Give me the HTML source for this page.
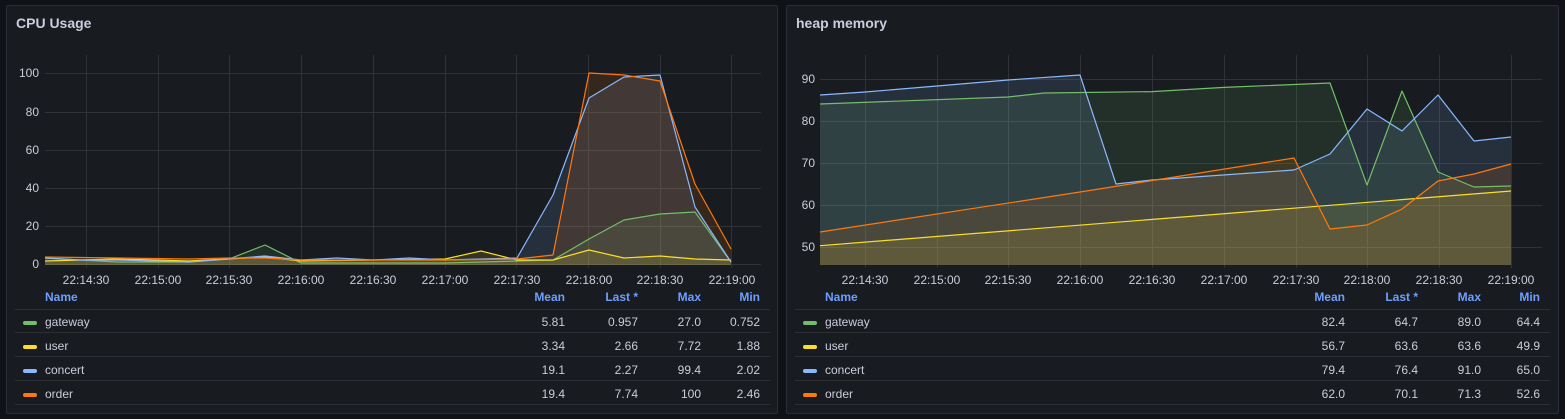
<!DOCTYPE html>
<html><head><meta charset="utf-8"><style>
*{margin:0;padding:0;box-sizing:border-box}
body{width:1565px;height:419px;background:#111217;font-family:"Liberation Sans",sans-serif;color:#ccccdc;overflow:hidden;position:relative}
.panel{position:absolute;top:5px;height:409px;background:#181b1f;border:1px solid #2a2d33;border-radius:2px}
.title{position:absolute;left:9px;top:9px;font-size:14px;font-weight:bold;color:#ccccdc}
svg{position:absolute;left:0;top:0}
svg text{font-family:"Liberation Sans",sans-serif;font-size:12px;fill:#ccccdc}
.leg{position:absolute;font-size:12px}
.row{position:absolute;left:0;height:23px;border-bottom:1px solid #2c2f35;width:100%}
.row span,.hdr span{position:absolute;top:5px}
.hdr span{color:#6e9fff;font-weight:bold;top:0}
.sw{position:absolute;left:8px;top:11px;width:14px;height:4px;border-radius:2px}
</style></head><body>

<div class="panel" style="left:6px;width:772px"><div class="title">CPU Usage</div></div>
<div class="panel" style="left:786px;width:773px"><div class="title">heap memory</div></div>

<svg width="1565" height="419">
<g stroke="#2f3237" stroke-width="1">
<line x1="45" x2="761" y1="73.5" y2="73.5"/><line x1="45" x2="761" y1="112.5" y2="112.5"/><line x1="45" x2="761" y1="150.5" y2="150.5"/><line x1="45" x2="761" y1="188.5" y2="188.5"/><line x1="45" x2="761" y1="226.5" y2="226.5"/><line x1="45" x2="761" y1="264.5" y2="264.5"/>
<line x1="86.5" x2="86.5" y1="55" y2="268"/><line x1="158.5" x2="158.5" y1="55" y2="268"/><line x1="229.5" x2="229.5" y1="55" y2="268"/><line x1="301.5" x2="301.5" y1="55" y2="268"/><line x1="373.5" x2="373.5" y1="55" y2="268"/><line x1="445.5" x2="445.5" y1="55" y2="268"/><line x1="516.5" x2="516.5" y1="55" y2="268"/><line x1="588.5" x2="588.5" y1="55" y2="268"/><line x1="660.5" x2="660.5" y1="55" y2="268"/><line x1="731.5" x2="731.5" y1="55" y2="268"/>
<line x1="820" x2="1542" y1="79.5" y2="79.5"/><line x1="820" x2="1542" y1="121.5" y2="121.5"/><line x1="820" x2="1542" y1="163.5" y2="163.5"/><line x1="820" x2="1542" y1="205.5" y2="205.5"/><line x1="820" x2="1542" y1="247.5" y2="247.5"/>
<line x1="865.5" x2="865.5" y1="55" y2="268"/><line x1="937.5" x2="937.5" y1="55" y2="268"/><line x1="1008.5" x2="1008.5" y1="55" y2="268"/><line x1="1080.5" x2="1080.5" y1="55" y2="268"/><line x1="1152.5" x2="1152.5" y1="55" y2="268"/><line x1="1224.5" x2="1224.5" y1="55" y2="268"/><line x1="1296.5" x2="1296.5" y1="55" y2="268"/><line x1="1367.5" x2="1367.5" y1="55" y2="268"/><line x1="1439.5" x2="1439.5" y1="55" y2="268"/><line x1="1511.5" x2="1511.5" y1="55" y2="268"/>
</g>
<g text-anchor="end">
<text x="39" y="77">100</text><text x="39" y="116">80</text><text x="39" y="154">60</text><text x="39" y="192">40</text><text x="39" y="230">20</text><text x="39" y="268">0</text>
<text x="815" y="83">90</text><text x="815" y="125">80</text><text x="815" y="167">70</text><text x="815" y="209">60</text><text x="815" y="251">50</text>
</g>
<g text-anchor="middle">
<text x="86" y="284">22:14:30</text><text x="158" y="284">22:15:00</text><text x="229" y="284">22:15:30</text><text x="301" y="284">22:16:00</text><text x="373" y="284">22:16:30</text><text x="445" y="284">22:17:00</text><text x="517" y="284">22:17:30</text><text x="589" y="284">22:18:00</text><text x="660" y="284">22:18:30</text><text x="732" y="284">22:19:00</text>
<text x="865" y="284">22:14:30</text><text x="937" y="284">22:15:00</text><text x="1008" y="284">22:15:30</text><text x="1080" y="284">22:16:00</text><text x="1152" y="284">22:16:30</text><text x="1224" y="284">22:17:00</text><text x="1296" y="284">22:17:30</text><text x="1367" y="284">22:18:00</text><text x="1439" y="284">22:18:30</text><text x="1511" y="284">22:19:00</text>
</g>
<!-- fills -->
<g fill-opacity="0.13" stroke="none">
<path d="M45,258 L117,262 L189,262 L229,259 L265,245 L301,263 L373,263 L445,263 L517,261 L553,260 L589,239 L624,220 L660,214 L695,212 L731,262 L731,265 L45,265Z" fill="#73bf69"/>
<path d="M45,261 L117,259 L189,261 L265,257 L301,261 L373,260 L445,259 L481,251 L517,260 L553,260 L589,250 L624,258 L660,256 L695,259 L731,260 L731,265 L45,265Z" fill="#fade2a"/>
<path d="M45,258 L81,260 L117,260 L189,262 L265,256 L301,260 L337,258 L373,260 L409,258 L445,260 L517,258 L553,195 L589,98 L624,77 L660,75 L695,207 L731,262 L731,265 L45,265Z" fill="#8ab8ff"/>
<path d="M45,257 L117,258 L189,259 L229,258 L265,258 L301,260 L373,260 L445,260 L517,259 L553,255 L589,73 L624,75 L660,81 L695,184 L731,249 L731,265 L45,265Z" fill="#ff780a"/>
<path d="M820,104 L1008,97 L1044,93 L1152,91.6 L1224,87.4 L1330,83 L1367,185 L1402,91 L1438,172 L1474,187 L1511,186 L1511,265 L820,265Z" fill="#73bf69"/>
<path d="M820,245.7 L1511,191 L1511,265 L820,265Z" fill="#fade2a"/>
<path d="M820,95 L865,92 L937,86 L1008,80 L1080,75 L1116,184 L1152,180 L1294,170 L1330,154 L1367,109 L1402,131 L1438,95 L1474,141 L1511,137 L1511,265 L820,265Z" fill="#8ab8ff"/>
<path d="M820,232 L1080,192 L1294,158 L1330,229 L1367,225 L1402,209 L1438,181 L1474,174 L1511,164 L1511,265 L820,265Z" fill="#ff780a"/>
</g>
<!-- lines -->
<g fill="none" stroke-width="1.2" stroke-linejoin="round">
<path d="M45,258 L117,262 L189,262 L229,259 L265,245 L301,263 L373,263 L445,263 L517,261 L553,260 L589,239 L624,220 L660,214 L695,212 L731,262" stroke="#73bf69"/>
<path d="M45,261 L117,259 L189,261 L265,257 L301,261 L373,260 L445,259 L481,251 L517,260 L553,260 L589,250 L624,258 L660,256 L695,259 L731,260" stroke="#fade2a"/>
<path d="M45,258 L81,260 L117,260 L189,262 L265,256 L301,260 L337,258 L373,260 L409,258 L445,260 L517,258 L553,195 L589,98 L624,77 L660,75 L695,207 L731,262" stroke="#8ab8ff"/>
<path d="M45,257 L117,258 L189,259 L229,258 L265,258 L301,260 L373,260 L445,260 L517,259 L553,255 L589,73 L624,75 L660,81 L695,184 L731,249" stroke="#ff780a"/>
<path d="M820,104 L1008,97 L1044,93 L1152,91.6 L1224,87.4 L1330,83 L1367,185 L1402,91 L1438,172 L1474,187 L1511,186" stroke="#73bf69"/>
<path d="M820,245.7 L1511,191" stroke="#fade2a"/>
<path d="M820,95 L865,92 L937,86 L1008,80 L1080,75 L1116,184 L1152,180 L1294,170 L1330,154 L1367,109 L1402,131 L1438,95 L1474,141 L1511,137" stroke="#8ab8ff"/>
<path d="M820,232 L1080,192 L1294,158 L1330,229 L1367,225 L1402,209 L1438,181 L1474,174 L1511,164" stroke="#ff780a"/>
</g>
</svg>

<div class="leg" style="left:15px;top:290px;width:755px">
<div class="hdr" style="position:absolute;top:0;width:100%;height:20px;border-bottom:1px solid #2c2f35"><span style="left:30px">Name</span><span style="right:205px">Mean</span><span style="right:132px">Last *</span><span style="right:69px">Max</span><span style="right:10px">Min</span></div>
<div class="row" style="top:20px"><i class="sw" style="background:#73bf69"></i><span style="left:30px">gateway</span><span style="right:205px">5.81</span><span style="right:132px">0.957</span><span style="right:69px">27.0</span><span style="right:10px">0.752</span></div>
<div class="row" style="top:44px"><i class="sw" style="background:#fade2a"></i><span style="left:30px">user</span><span style="right:205px">3.34</span><span style="right:132px">2.66</span><span style="right:69px">7.72</span><span style="right:10px">1.88</span></div>
<div class="row" style="top:68px"><i class="sw" style="background:#8ab8ff"></i><span style="left:30px">concert</span><span style="right:205px">19.1</span><span style="right:132px">2.27</span><span style="right:69px">99.4</span><span style="right:10px">2.02</span></div>
<div class="row" style="top:92px"><i class="sw" style="background:#ff780a"></i><span style="left:30px">order</span><span style="right:205px">19.4</span><span style="right:132px">7.74</span><span style="right:69px">100</span><span style="right:10px">2.46</span></div>
</div>

<div class="leg" style="left:795px;top:290px;width:755px">
<div class="hdr" style="position:absolute;top:0;width:100%;height:20px;border-bottom:1px solid #2c2f35"><span style="left:30px">Name</span><span style="right:205px">Mean</span><span style="right:132px">Last *</span><span style="right:69px">Max</span><span style="right:10px">Min</span></div>
<div class="row" style="top:20px"><i class="sw" style="background:#73bf69"></i><span style="left:30px">gateway</span><span style="right:205px">82.4</span><span style="right:132px">64.7</span><span style="right:69px">89.0</span><span style="right:10px">64.4</span></div>
<div class="row" style="top:44px"><i class="sw" style="background:#fade2a"></i><span style="left:30px">user</span><span style="right:205px">56.7</span><span style="right:132px">63.6</span><span style="right:69px">63.6</span><span style="right:10px">49.9</span></div>
<div class="row" style="top:68px"><i class="sw" style="background:#8ab8ff"></i><span style="left:30px">concert</span><span style="right:205px">79.4</span><span style="right:132px">76.4</span><span style="right:69px">91.0</span><span style="right:10px">65.0</span></div>
<div class="row" style="top:92px"><i class="sw" style="background:#ff780a"></i><span style="left:30px">order</span><span style="right:205px">62.0</span><span style="right:132px">70.1</span><span style="right:69px">71.3</span><span style="right:10px">52.6</span></div>
</div>
</body></html>
